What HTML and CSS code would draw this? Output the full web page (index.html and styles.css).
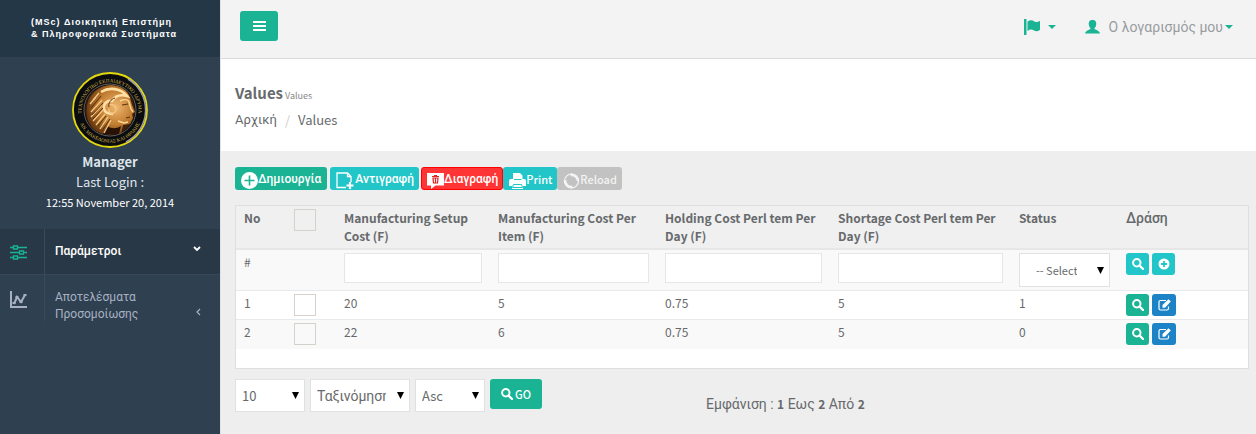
FILE: index.html
```html
<!DOCTYPE html>
<html lang="el">
<head>
<meta charset="utf-8">
<title>Values</title>
<link rel="stylesheet" href="styles.css">
</head>
<body>
<svg width="0" height="0" class="sprite" aria-hidden="true">
  <symbol id="search" viewBox="0 0 12 12"><circle cx="4.8" cy="4.8" r="3.7" fill="none" stroke="currentColor" stroke-width="2"/><path d="M7.5 7.5 11 11" stroke="currentColor" stroke-width="2.4" stroke-linecap="round"/></symbol>
  <symbol id="plus" viewBox="0 0 12 12"><path fill="currentColor" fill-rule="evenodd" d="M6 .5a5.5 5.5 0 1 0 0 11 5.5 5.5 0 0 0 0-11zM5.1 3h1.8v2.1H9v1.8H6.900V9H5.100V6.900H3V5.100h2.100z"/></symbol>
  <symbol id="edit" viewBox="0 0 13 12"><path d="M8 1.500H2.500A1.500 1.500 0 0 0 1 3v6.500A1.500 1.500 0 0 0 2.500 11H9a1.500 1.500 0 0 0 1.500-1.500V7.500" fill="none" stroke="currentColor" stroke-width="1.200"/><path d="M4.500 8.800V6L10.500.3l2.300 2.200L7 8.800z" fill="currentColor"/></symbol>
  <symbol id="caret" viewBox="0 0 8 4"><path d="M0 0h8L4 4z" fill="currentColor"/></symbol>
  <symbol id="arrow" viewBox="0 0 7 7"><path d="M0 0h7L3.500 7z" fill="currentColor"/></symbol>
</svg>
<div class="layout">
  <aside class="sidebar">
    <div class="brand">(MSc) Διοικητική Επιστήμη<br>&amp; Πληροφοριακά Συστήματα</div>
    <div class="profile">
      <svg class="emblem" viewBox="0 0 76 76" role="img" aria-label="Emblem">
        <defs>
          <radialGradient id="gold" cx=".6" cy=".45" r=".6"><stop offset="0" stop-color="#f0b870"/><stop offset=".6" stop-color="#c07c30"/><stop offset="1" stop-color="#6a3a10"/></radialGradient>
          <path id="top" d="M11 48A28.500 28.500 0 1 1 65 48"/>
          <path id="bottom" d="M7 49A33 33 0 0 0 69 49"/>
        </defs>
        <circle cx="38" cy="38" r="37" fill="#0b0c10" stroke="#e3d80c" stroke-width="1.800"/>
        <path d="M56 7A36 36 0 0 1 54 70" fill="none" stroke="#9c9da5" stroke-width="1.500"/>
        <circle cx="38" cy="38" r="26" fill="#060606" stroke="#777" stroke-width=".8"/>
        <circle cx="38" cy="38" r="25" fill="#3d210b"/>
        <path d="M16 48C11 29 21 15 38 13c10 0 18 5 20 13l2 7 3 7-3 2 1 4-3 6-7 1-2 9H31c-8-2-13-8-15-14z" fill="url(#gold)"/>
        <path d="M35 54c5 3 9 3 14 0l-2 8H31z" fill="#281205"/>
        <path d="M29 20c8-5 20-4 26 4-7-2-12 0-15 5-5-1-9 3-8 8 1 4 5 5 9 5" fill="none" stroke="#ffe0a4" stroke-width="2.600"/>
        <path d="M37 33c5-2 9 3 6 7-3 3-7 1-6-3M27 21l-6 7M24 25l-6 7M30 28l-11 12M30 33l-11 12M31 38l-10 11M33 42l-9 11M36 45l-8 12M39 48l-7 13" fill="none" stroke="#f4c985" stroke-width="1.300"/>
        <path d="M29 24l-10 12M31 31l-11 12M31 36l-10 11M34 44l-8 10M38 47l-8 12M43 26c-4 1-7 5-6 9M50 33l6-1M54 46l4-1" fill="none" stroke="#4c2409" stroke-width=".9"/>
        <path d="M48 29c4-2 8-2 9 1l2 7 2 3M46 49l6 2 4-1" fill="none" stroke="#ffd894" stroke-width="1.400"/>
        <text class="emblem-text"><textPath href="#top" startOffset="50%">ΤΕΧΝΟΛΟΓΙΚΟ ΕΚΠΑΙΔΕΥΤΙΚΟ ΙΔΡΥΜΑ</textPath></text>
        <text class="emblem-text"><textPath href="#bottom" startOffset="50%">ΑΝ. ΜΑΚΕΔΟΝΙΑΣ ΚΑΙ ΘΡΑΚΗΣ</textPath></text>
      </svg>
      <strong class="name">Manager</strong>
      <span class="login">Last Login :</span>
      <span class="date">12:55 November 20, 2014</span>
    </div>
    <nav class="menu">
      <a href="#" class="item active">
        <span class="item-icon"><svg width="17" height="15" viewBox="0 0 17 15" fill="none" stroke="currentColor" stroke-width="1.300"><path d="M0 2.500h3.500M7.500 2.500H17M0 7.500h9.500M13.500 7.500H17M0 12.500h3.500M7.500 12.500H17"/><path d="M3.500 1h4v3h-4zM9.500 6h4v3h-4zM3.500 11h4v3h-4z"/></svg></span>
        <span class="item-label">Παράμετροι</span>
        <svg class="chevron" width="8" height="6" viewBox="0 0 8 6" fill="none" stroke="currentColor" stroke-width="1.800"><path d="M1 1l3 3 3-3"/></svg>
      </a>
      <a href="#" class="item results">
        <span class="item-icon"><svg width="17" height="17" viewBox="0 0 17 17" fill="none" stroke="currentColor"><path d="M1 0v16h16" stroke-width="2"/><path d="M4 13l3-7 4 5 4-7" stroke-width="2"/><path d="M4 11v2M7 5v2M11 10v2M15 3v2" stroke-width="3"/></svg></span>
        <span class="item-label">Αποτελέσματα Προσομοίωσης</span>
        <svg class="chevron" width="5" height="8" viewBox="0 0 5 8" fill="none" stroke="currentColor" stroke-width="1.200"><path d="M4 1L1 4l3 3"/></svg>
      </a>
    </nav>
  </aside>
  <main class="main">
    <header class="topbar">
      <button class="toggle" type="button" aria-label="Menu"><svg width="13" height="10" viewBox="0 0 13 10"><path d="M0 0h13v2H0zM0 4h13v2H0zM0 8h13v2H0z" fill="currentColor"/></svg></button>
      <div class="tools">
        <a href="#" class="language" aria-label="Language"><svg width="17" height="16" viewBox="0 0 17 16" fill="currentColor"><path d="M0 0h2.500v16H0z"/><path d="M3.500 2.500c3-2 5-1.500 6.500-.3 2 1.500 4 1 6-.4v9c-2 1.800-4 2-6 .8-2-1.500-4-1.300-6.500.4z"/></svg><svg width="8" height="4"><use href="#caret"/></svg></a>
        <a href="#" class="account"><svg width="15" height="14" viewBox="0 0 15 14" fill="currentColor"><path d="M7.500 0c-3 0-4 2-3.700 4.500.2 2 1 3 1.900 4C5 10 1 10 0 13.500h15C14 10 10 10 9.300 8.500c.9-1 1.700-2 1.900-4C11.500 2 10.500 0 7.500 0z"/></svg><span>Ο λογαρισμός μου</span><svg width="8" height="4"><use href="#caret"/></svg></a>
      </div>
    </header>
    <section class="heading">
      <h1>Values <small>Values</small></h1>
      <nav class="crumbs"><a href="#" class="el">Αρχική</a><span class="slash">/</span><span>Values</span></nav>
    </section>
    <section class="content">
      <div class="actions">
        <button type="button" class="btn green create"><svg width="17" height="17" viewBox="0 0 17 17"><circle cx="8.500" cy="8.500" r="8.500" fill="currentColor"/><path d="M8.500 3.500v10M3.500 8.500h10" stroke="#1ab394" stroke-width="1.600"/></svg><span class="el">Δημιουργία</span></button>
        <button type="button" class="btn cyan copy"><svg width="18" height="17" viewBox="0 0 18 17" fill="none" stroke="currentColor"><path d="M10 15.500H1V1h10.500l3.500 3.500V10M11.500 1v3.500H15" stroke-width="1.300"/><path d="M14 10v7M10.500 13.500h7" stroke-width="2.200"/></svg><span class="el">Αντιγραφή</span></button>
        <button type="button" class="btn red delete"><svg width="17" height="16" viewBox="0 0 17 16"><path d="M0 0h17v12.500H8.500L4 16v-3.500H0z" fill="currentColor"/><path d="M5 3.500h7M7 2.500h3M6 5h5l-.5 5h-4zM8.500 5v5" stroke="#e02424" stroke-width="1.200" fill="none"/></svg><span class="el">Διαγραφή</span></button>
        <button type="button" class="btn cyan print"><svg width="17" height="16" viewBox="0 0 17 16"><path d="M4 6V0h7l2.500 2.500V6H15a2 2 0 0 1 2 2v5h-3v3H3v-3H0V8a2 2 0 0 1 2-2z" fill="currentColor"/><path d="M5 6.500h7.500M4.500 11.500h8l1 3h-10z" stroke="#23c6c8" stroke-width="1" fill="none"/></svg><span>Print</span></button>
        <button type="button" class="btn reload" disabled><svg width="17" height="16" viewBox="0 0 17 16" fill="none" stroke="currentColor"><circle cx="8.500" cy="8" r="7" stroke-width="1.200"/><path d="M2 7a6.500 6.500 0 0 0 7.500 7M7.500 2a6.500 6.500 0 0 1 7.500 6" stroke-width="2.600"/></svg><span>Reload</span></button>
      </div>
      <div class="panel">
        <table>
          <colgroup><col class="c-no"><col class="c-no"><col class="c-setup"><col class="c-item"><col class="c-hold"><col class="c-short"><col class="c-status"><col class="c-act"></colgroup>
          <thead>
            <tr><th>No</th><th><input type="checkbox" aria-label="Select all"></th><th>Manufacturing Setup Cost (F)</th><th>Manufacturing Cost Per Item (F)</th><th>Holding Cost Perl tem Per Day (F)</th><th>Shortage Cost Perl tem Per Day (F)</th><th>Status</th><th class="el">Δράση</th></tr>
          </thead>
          <tbody>
            <tr class="filters"><td>#</td><td></td><td><input type="text" aria-label="Manufacturing Setup Cost"></td><td><input type="text" aria-label="Manufacturing Cost Per Item"></td><td><input type="text" aria-label="Holding Cost"></td><td><input type="text" aria-label="Shortage Cost"></td>
              <td><span class="pick status"><select aria-label="Status"><option>-- Select --</option></select><svg width="7" height="7"><use href="#arrow"/></svg></span></td>
              <td><div class="row-actions"><button type="button" class="mini cyan" aria-label="Search"><svg width="12" height="12"><use href="#search"/></svg></button><button type="button" class="mini cyan" aria-label="Add"><svg width="12" height="12"><use href="#plus"/></svg></button></div></td></tr>
            <tr><td>1</td><td><input type="checkbox" aria-label="Row 1"></td><td>20</td><td>5</td><td>0.75</td><td>5</td><td>1</td><td><div class="row-actions"><button type="button" class="mini green" aria-label="View"><svg width="12" height="12"><use href="#search"/></svg></button><button type="button" class="mini blue" aria-label="Edit"><svg width="13" height="12"><use href="#edit"/></svg></button></div></td></tr>
            <tr class="alt"><td>2</td><td><input type="checkbox" aria-label="Row 2"></td><td>22</td><td>6</td><td>0.75</td><td>5</td><td>0</td><td><div class="row-actions"><button type="button" class="mini green" aria-label="View"><svg width="12" height="12"><use href="#search"/></svg></button><button type="button" class="mini blue" aria-label="Edit"><svg width="13" height="12"><use href="#edit"/></svg></button></div></td></tr>
          </tbody>
        </table>
      </div>
      <div class="footer">
        <form class="sorting">
          <span class="pick small"><select aria-label="Page size"><option>10</option></select><svg width="7" height="7"><use href="#arrow"/></svg></span>
          <span class="pick wide"><select class="el" aria-label="Sort by"><option>Ταξινόμηση</option></select><svg width="7" height="7"><use href="#arrow"/></svg></span>
          <span class="pick small"><select aria-label="Direction"><option>Asc</option></select><svg width="7" height="7"><use href="#arrow"/></svg></span>
          <button type="button" class="go green"><svg width="12" height="12"><use href="#search"/></svg>GO</button>
        </form>
        <p class="summary">Εμφάνιση : <b>1</b> Εως <b>2</b> Από <b>2</b></p>
      </div>
    </section>
  </main>
</div>
</body>
</html>
```
FILE: styles.css
```css
* { box-sizing: border-box; }
body { margin: 0; background: #eee; color: #676a6c; font: 12px/18px "Noto Sans CJK SC", sans-serif; }
a { color: inherit; text-decoration: none; }
button, input, select { font: inherit; color: inherit; margin: 0; }
svg { display: block; flex: none; }
.sprite { position: absolute; }
.el { font-family: Roboto, sans-serif; }
.layout { display: flex; min-height: 100vh; }

.sidebar { flex: none; width: 220px; background: #2f4050; color: #dfe4ed; }
.brand { height: 57px; padding: 16px 28px 0 31px; background: #243747; color: #fff; font: bold 9px/12px "Liberation Sans", sans-serif; letter-spacing: 1px; white-space: nowrap; }
.profile { display: flex; flex-direction: column; align-items: center; height: 172px; padding-top: 15px; }
.emblem { width: 76px; height: 76px; margin-bottom: 4px; }
.emblem-text { fill: #d0b545; font: 5px "Liberation Serif", serif; text-anchor: middle; }
.name { font-size: 13px; line-height: 20px; }
.login { font-size: 13px; line-height: 20px; }
.date { font-size: 11px; line-height: 20px; color: #fff; }
.menu { font: 12px/17px Roboto, sans-serif; color: #a7b1c2; }
.item { display: flex; padding-right: 19px; }
.item-icon { width: 45px; padding-left: 10px; margin-right: 10px; border-right: 1px solid #3a4a59; }
.item-label { flex: 1; padding-top: 14px; }
.active { height: 46px; background: #293846; color: #fff; font-weight: 500; border-bottom: 1px solid #384858; }
.active .item-icon { color: #1ab394; padding-top: 16px; }
.active .chevron { margin-top: 17px; }
.results .item-icon { height: 46px; padding-top: 16px; }
.results .chevron { margin-top: 33px; }

.main { flex: 1; min-width: 0; border-left: 1px solid #e0e2e5; }
.topbar { display: flex; align-items: flex-start; justify-content: space-between; height: 59px; padding: 11px 23px 0 19px; background: #f3f3f4; border-bottom: 1px solid #d9dadb; }
.toggle { display: grid; place-items: center; width: 38px; height: 30px; padding: 0; border: 0; border-radius: 3px; background: #1ab394; color: #fff; }
.tools { display: flex; gap: 29px; padding-top: 5px; color: #1ab394; }
.language, .account { display: flex; align-items: center; height: 22px; }
.language { gap: 7px; }
.account { gap: 2px; }
.account span { margin-left: 7px; color: #999c9e; font: 14px/20px Roboto, sans-serif; }
.heading { height: 92px; padding: 24px 14px 0; background: #fff; }
h1 { display: flex; align-items: baseline; gap: 2px; height: 20px; margin: 0; font-size: 15px; line-height: 20px; }
h1 small { font-size: 9px; font-weight: 400; color: #888; }
.crumbs { display: flex; align-items: center; height: 20px; margin-top: 7px; font-size: 13px; line-height: 20px; }
.slash { padding: 0 8px; color: #ccc; }

.content { padding: 16px 7px 16px 14px; }
.actions { display: flex; height: 23px; }
.btn { display: flex; align-items: center; height: 23px; padding: 0 4px 0 5px; border: 1px solid transparent; border-radius: 3px; color: #fff; font-size: 11px; font-weight: 500; line-height: 20px; white-space: nowrap; }
.btn svg { margin-top: 4px; }
.btn .el { font-size: 12px; }
.create { padding-right: 5px; margin-right: 3px; }
.copy { gap: 1px; margin-right: 2px; }
.green { background: #1ab394; color: #fff; }
.cyan { background: #23c6c8; color: #fff; }
.red { background: #ff3434; border-color: #f00; }
.blue { background: #1c84c6; color: #fff; }
.reload { background: #c2c2c2; color: #f4f4f4; }

.panel { margin-top: 15px; padding-bottom: 19px; background: #fff; border: 1px solid #dfdfdf; }
table { width: 100%; table-layout: fixed; border-collapse: separate; border-spacing: 0; }
.c-no { width: 50px; }
.c-setup { width: 154px; }
.c-item { width: 167px; }
.c-hold { width: 173px; }
.c-short { width: 181px; }
.c-status { width: 107px; }
.c-act { width: 130px; }
th, td { padding: 3px 8px 0; text-align: left; vertical-align: top; }
th { height: 44px; background: #f0f0f0; border-bottom: 2px solid #e7e7e7; }
th.el { font-size: 14px; font-weight: 500; }
td { height: 29px; border-bottom: 1px solid #e7eaec; }
.alt td { background: #f9f9f9; border: 0; }
.filters td { height: 41px; background: #f9f9f9; }
input[type=checkbox] { display: block; appearance: none; width: 22px; height: 22px; border: 1px solid #d4d2cb; background: transparent; }
input[type=text] { display: block; width: 100%; height: 30px; border: 1px solid #e5e6e7; background: #fff; padding: 4px; }
.row-actions { display: flex; gap: 3px; }
.mini { display: grid; place-items: center; height: 22px; padding: 0 5px 0 6px; border: 0; border-radius: 3px; }

.pick { display: grid; align-items: center; }
.pick > * { grid-area: 1 / 1; }
.pick svg { justify-self: end; margin-right: 6px; color: #000; pointer-events: none; }
.pick select { appearance: none; width: 100%; height: 33px; padding: 0 23px 0 6px; border: 1px solid #e0e1e2; border-radius: 0; background: #fff; }
.status select { height: 34px; padding: 0 32px 0 16px; font-size: 11px; }
.footer { display: flex; margin-top: 10px; }
.sorting { display: flex; align-items: flex-start; gap: 5px; width: 471px; font-size: 13px; }
.small { width: 70px; }
.wide { width: 100px; }
.wide select { font-size: 14px; }
.go { display: flex; align-items: center; gap: 2px; height: 30px; padding: 0 11px; border: 0; border-radius: 3px; font-size: 11px; font-weight: 500; }
.summary { margin: 15px 0 0; font: 14px/20px Roboto, sans-serif; }
.summary b { font: 700 12px/20px "Noto Sans CJK SC", sans-serif; }
```
